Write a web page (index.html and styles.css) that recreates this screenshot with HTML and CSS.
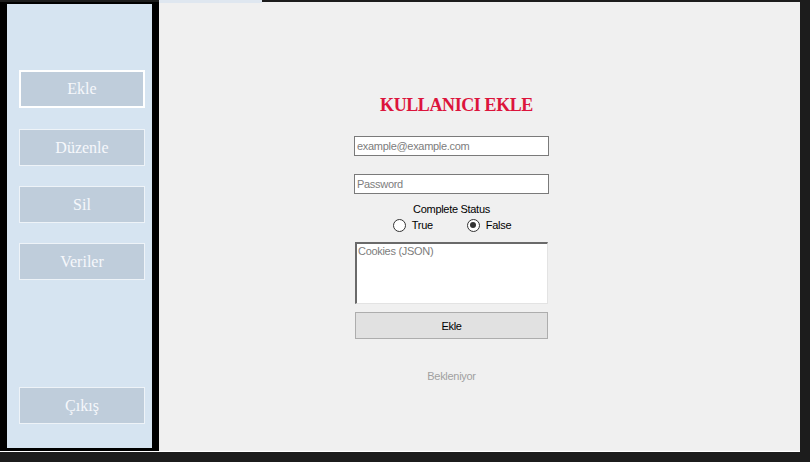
FILE: index.html
```html
<!DOCTYPE html>
<html lang="tr">
<head>
<meta charset="utf-8">
<title>Kullanıcı Ekle</title>
<link rel="stylesheet" href="styles.css">
</head>
<body>
<div class="window">
  <aside class="sidebar">
    <nav class="nav">
      <button class="nav-btn active">Ekle</button>
      <button class="nav-btn">Düzenle</button>
      <button class="nav-btn">Sil</button>
      <button class="nav-btn">Veriler</button>
      <button class="nav-btn exit">Çıkış</button>
    </nav>
  </aside>
  <main class="content">
    <div class="form">
      <h1 class="title">KULLANICI EKLE</h1>
      <input class="field email" type="text" placeholder="example@example.com">
      <input class="field password" type="text" placeholder="Password">
      <div class="status-label">Complete Status</div>
      <div class="radios">
        <label class="radio"><span class="dot"></span>True</label>
        <label class="radio"><span class="dot checked"></span>False</label>
      </div>
      <textarea class="cookies" placeholder="Cookies (JSON)"></textarea>
      <button class="submit">Ekle</button>
      <div class="state">Bekleniyor</div>
    </div>
  </main>
</div>
</body>
</html>
```
FILE: styles.css
```css
html, body {
  margin: 0;
  padding: 0;
}
body {
  width: 810px;
  height: 462px;
  background: #1c1c1c;
  overflow: hidden;
  font-family: "Liberation Sans", Arial, sans-serif;
}
.window {
  display: flex;
  width: 800px;
  height: 450px;
  margin-top: 2px;
  border-bottom: 1px solid #ffffff;
  box-sizing: border-box;
}
.sidebar {
  width: 159px;
  background: #000000;
  padding: 2px 7px 3px 7px;
  box-sizing: border-box;
  display: flex;
}
.nav {
  flex: 1;
  background: #d6e4f1;
  display: flex;
  flex-direction: column;
  align-items: flex-start;
  padding-top: 66px;
  padding-bottom: 24px;
  padding-left: 12px;
  gap: 20px;
}
.nav-btn {
  width: 126px;
  height: 37px;
  margin: 0;
  padding: 0;
  background: #bfcddb;
  border: 1px solid #eef3f8;
  color: #f6f8fb;
  font-family: "Liberation Serif", "Times New Roman", serif;
  font-size: 16px;
  box-sizing: border-box;
}
.nav-btn.active {
  height: 38px;
  margin-bottom: 1px;
  border: 2px solid #ffffff;
}
.nav-btn.exit {
  margin-top: auto;
}
.content {
  flex: 1;
  background: #f0f0f0;
  position: relative;
  padding-left: 195px;
  padding-top: 93px;
  box-sizing: border-box;
}
.content::before {
  content: "";
  position: absolute;
  left: 0;
  top: -2px;
  width: 103px;
  height: 3px;
  background: #dfe7f0;
}
.form {
  width: 195px;
  display: flex;
  flex-direction: column;
  font-size: 11px;
  letter-spacing: -0.3px;
}
.title {
  margin: 0 0 21px 10px;
  font-family: "Liberation Serif", "Times New Roman", serif;
  font-weight: bold;
  font-size: 18px;
  line-height: 20px;
  letter-spacing: -0.4px;
  color: #dc143c;
  text-align: center;
}
.field {
  width: 195px;
  height: 20px;
  margin: 0;
  padding: 0 2px;
  box-sizing: border-box;
  border: 1px solid #7a7a7a;
  background: #ffffff;
  font-family: "Liberation Sans", Arial, sans-serif;
  font-size: 11px;
  letter-spacing: -0.3px;
  outline: none;
}
.field::placeholder,
.cookies::placeholder {
  color: #7d7d7d;
  opacity: 1;
}
.email {
  margin-bottom: 18px;
}
.status-label {
  margin-top: 9px;
  line-height: 13px;
  text-align: center;
  color: #000000;
}
.radios {
  display: flex;
  justify-content: center;
  gap: 34px;
  margin-top: 2px;
  height: 14px;
  padding-left: 1px;
}
.radio {
  display: flex;
  align-items: center;
  gap: 6px;
  line-height: 14px;
  color: #000000;
}
.dot {
  width: 11px;
  height: 11px;
  border: 1px solid #333333;
  border-radius: 50%;
  background: #ffffff;
  position: relative;
}
.dot.checked::after {
  content: "";
  position: absolute;
  left: 2.5px;
  top: 2.5px;
  width: 6px;
  height: 6px;
  border-radius: 50%;
  background: #333333;
}
.cookies {
  width: 193px;
  height: 62px;
  margin: 10px 0 0 1px;
  padding: 1px 0 0 1px;
  box-sizing: border-box;
  border-style: solid;
  border-width: 2px 1px 1px 2px;
  border-color: #6a6a6a #e3e3e3 #e3e3e3 #6a6a6a;
  background: #ffffff;
  font-family: "Liberation Sans", Arial, sans-serif;
  font-size: 11px;
  letter-spacing: -0.3px;
  resize: none;
  outline: none;
}
.submit {
  width: 193px;
  height: 27px;
  margin: 8px 0 0 1px;
  padding: 0;
  box-sizing: border-box;
  background: #e1e1e1;
  border: 1px solid #adadad;
  color: #000000;
  font-family: "Liberation Sans", Arial, sans-serif;
  font-size: 11px;
  letter-spacing: -0.3px;
}
.state {
  margin-top: 31px;
  line-height: 13px;
  text-align: center;
  color: #a0a0a0;
}
```
